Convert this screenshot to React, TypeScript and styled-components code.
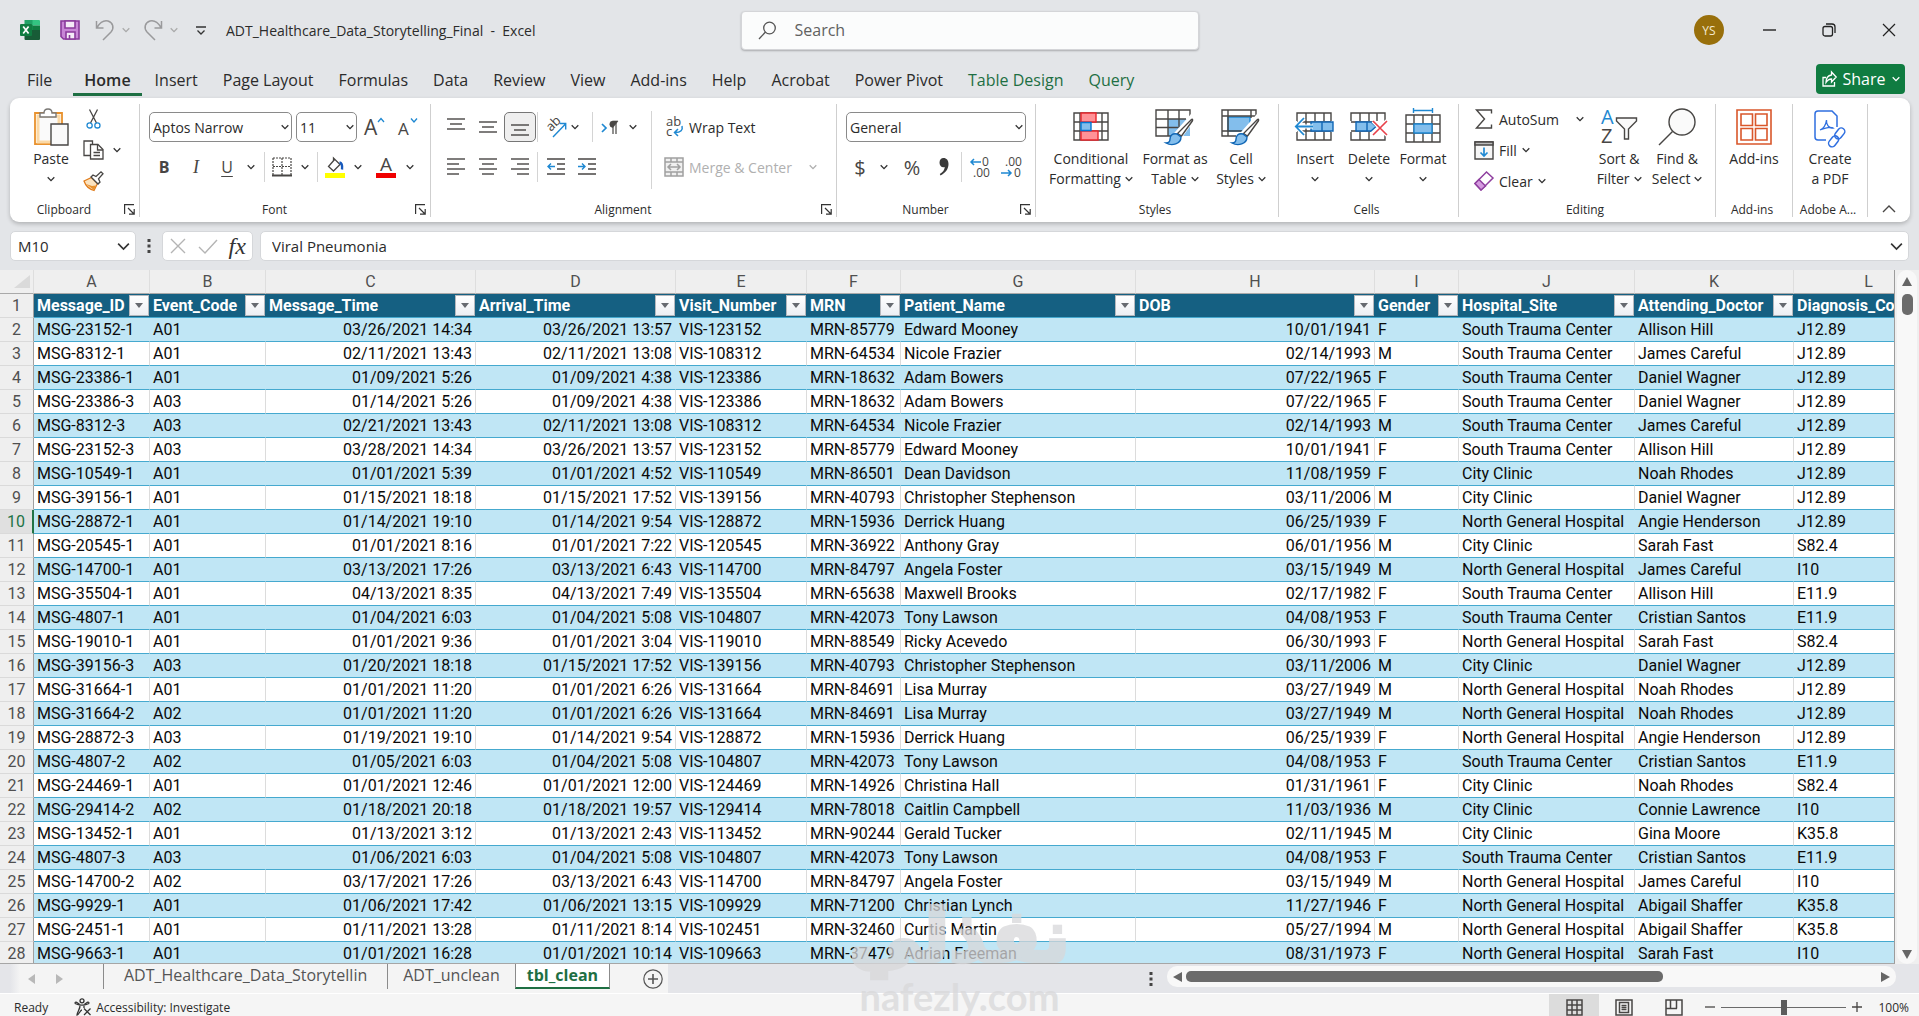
import React from "react";
import styled, { createGlobalStyle, css } from "styled-components";

const UI = `"Open Sans", "Noto Sans", sans-serif`;
const CELL = `Roboto, "Noto Sans", sans-serif`;
const INK = "#2b2b2b";
const LINE = "#484644";
const BLUE = "#1e88d2";
const GREEN = "#1e6f43";

const GlobalStyle = createGlobalStyle`
  *, *::before, *::after { box-sizing: border-box; }
  body { margin: 0; background: #e3e5e8; color: ${INK}; font-family: ${UI}; font-size: 14px; overflow: hidden; }
  button, input, select { font: inherit; color: inherit; }
  button { border: 0; padding: 0; background: none; cursor: pointer; }
  svg { display: block; flex: none; overflow: visible; }
`;

const Window = styled.div`
  display: flex;
  flex-direction: column;
  height: 100vh;
  position: relative;
`;

/* ---------- Title bar ---------- */
const TitleBar = styled.header`
  display: grid;
  grid-template-columns: 1fr minmax(200px, 458px) 1fr;
  align-items: center;
  height: 60px;
  padding-left: 20px;
  flex: none;
`;
const QuickAccess = styled.div`
  display: flex;
  align-items: center;
  min-width: 0;
`;
const QuickButton = styled.button<{ $w?: number; $ml?: number }>`
  display: flex;
  align-items: center;
  justify-content: center;
  width: ${(p) => p.$w ?? 20}px;
  height: 24px;
  margin-left: ${(p) => p.$ml ?? 0}px;
`;
const DocTitle = styled.h1`
  margin: 0 0 0 15px;
  font-size: 14px;
  font-weight: 400;
  white-space: pre;
`;
const SearchBox = styled.label`
  display: flex;
  align-items: center;
  gap: 16px;
  height: 39px;
  padding: 0 16px;
  border-radius: 4px;
  background: #fbfcfc;
  border: 1px solid #d4d5d8;
  box-shadow: 0 1px 2px rgba(0, 0, 0, 0.25);
`;
const SearchInput = styled.input`
  flex: 1;
  min-width: 0;
  border: 0;
  outline: 0;
  background: none;
  font-size: 16px;
  &::placeholder { color: #616161; opacity: 1; }
`;
const WindowControls = styled.div`
  display: flex;
  align-items: center;
  justify-content: flex-end;
`;
const Avatar = styled.button`
  width: 30px;
  height: 30px;
  margin-right: 15px;
  border-radius: 50%;
  background: #986f0b;
  color: #f4e9cf;
  font-size: 12px;
`;
const WindowButton = styled.button`
  display: flex;
  align-items: center;
  justify-content: center;
  width: 60px;
  height: 40px;
`;

/* ---------- Ribbon tabs ---------- */
const TabStrip = styled.nav`
  display: flex;
  align-items: flex-start;
  gap: 1px;
  height: 38px;
  flex: none;
  padding: 0 14px 0 15px;
`;
const RibbonTab = styled.button<{ $active?: boolean; $context?: boolean }>`
  display: flex;
  align-items: center;
  height: 36px;
  padding: 6px 12px 0;
  font-size: 16px;
  border-bottom: 3px solid transparent;
  white-space: nowrap;
  ${(p) => p.$context && css`color: ${GREEN};`}
  ${(p) =>
    p.$active &&
    css`
      margin-left: 8px;
      padding: 6px 11px 0;
      font-weight: 600;
      border-bottom-color: ${GREEN};
    `}
`;
const ShareButton = styled.button`
  display: flex;
  align-items: center;
  justify-content: center;
  gap: 6px;
  width: 89px;
  height: 30px;
  margin: 4px 0 0 auto;
  border-radius: 4px;
  background: #107c41;
  color: #fff;
  font-size: 16px;
`;

/* ---------- Ribbon ---------- */
const Ribbon = styled.section`
  display: flex;
  flex: none;
  height: 124px;
  margin: 0 9px 0 10px;
  padding: 6px 0 5px;
  border-radius: 9px;
  background: #fff;
  box-shadow: 0 2px 4px rgba(0, 0, 0, 0.22);
`;
const Group = styled.section<{ $w: number }>`
  display: flex;
  flex-direction: column;
  flex: 0 0 ${(p) => p.$w}px;
  border-right: 1px solid #cfcfcf;
`;
const GroupBody = styled.div<{ $pad?: number; $center?: boolean }>`
  display: flex;
  flex: 1;
  align-items: flex-start;
  padding-left: ${(p) => p.$pad ?? 0}px;
  ${(p) => p.$center && css`justify-content: center;`}
`;
const GroupFooter = styled.footer`
  display: flex;
  align-items: center;
  justify-content: flex-end;
  gap: 6px;
  height: 16px;
  padding-right: 4px;
  font-size: 12px;
`;
const GroupLabel = styled.span`
  flex: 1;
  text-align: center;
  white-space: nowrap;
`;
const Rows = styled.div<{ $tight?: boolean }>`
  display: flex;
  flex-direction: column;
  gap: ${(p) => (p.$tight ? 1 : 10)}px;
  padding-top: ${(p) => (p.$tight ? 0 : 8)}px;
`;
const Row = styled.div<{ $gap?: number }>`
  display: flex;
  align-items: center;
  gap: ${(p) => p.$gap ?? 0}px;
  height: 30px;
`;
const Tool = styled.button<{ $w?: number; $on?: boolean }>`
  display: flex;
  align-items: center;
  justify-content: center;
  width: ${(p) => p.$w ?? 28}px;
  height: 30px;
  font-size: 17px;
  color: ${LINE};
  ${(p) =>
    p.$on &&
    css`
      border: 1px solid #767676;
      border-radius: 5px;
      background: #efefef;
    `}
`;
const Rule = styled.i<{ $l?: number; $r?: number; $tall?: boolean }>`
  width: 1px;
  height: ${(p) => (p.$tall ? 78 : 30)}px;
  margin: ${(p) => (p.$tall ? 7 : 0)}px ${(p) => p.$r ?? 3}px 0 ${(p) => p.$l ?? 3}px;
  background: #d4d4d4;
`;
const SelectWrap = styled.span<{ $w: number }>`
  display: grid;
  grid-template: 30px / 1fr;
  align-items: center;
  width: ${(p) => p.$w}px;
  & > * { grid-area: 1 / 1; }
  & > svg { justify-self: end; margin-right: 3px; pointer-events: none; }
`;
const Select = styled.select`
  appearance: none;
  width: 100%;
  height: 30px;
  padding: 0 14px 0 3px;
  border: 1px solid #8a8a8a;
  border-radius: 5px;
  background: #fff;
  font-size: 14px;
`;
const LargeTool = styled.button<{ $w: number }>`
  display: flex;
  flex-direction: column;
  align-items: center;
  width: ${(p) => p.$w}px;
  line-height: 20px;
  white-space: nowrap;
`;
const LargeIcon = styled.span`
  display: flex;
  align-items: center;
  height: 45px;
`;
const LargeLine = styled.span`
  display: flex;
  align-items: center;
  gap: 4px;
  height: 20px;
`;
const WideTool = styled.button<{ $off?: boolean }>`
  display: flex;
  align-items: center;
  gap: 5px;
  height: 30px;
  white-space: nowrap;
  ${(p) => p.$off && css`color: #b0b0b0;`}
`;
const Spacer = styled.span`
  width: 12px;
`;
const Bold = styled.b`font-size: 16px;`;
const Italic = styled.i`font-family: "Liberation Serif", serif; font-size: 18px;`;
const Under = styled.u`font-size: 16px; text-underline-offset: 3px;`;
const FormatMark = styled.span`font-size: 20px;`;
const CollapseArea = styled.div`
  display: flex;
  flex: 1;
  align-items: flex-end;
  justify-content: center;
  padding-bottom: 4px;
`;

/* ---------- Formula bar ---------- */
const FormulaBar = styled.section`
  display: flex;
  align-items: center;
  flex: none;
  height: 48px;
  padding: 0 10px;
`;
const Field = styled.div<{ $w?: number }>`
  display: flex;
  align-items: center;
  height: 30px;
  border: 1px solid #d5d7da;
  border-radius: 5px;
  background: #fff;
  ${(p) => (p.$w ? css`width: ${p.$w}px;` : css`flex: 1; margin-left: 7px;`)}
`;
const FieldInput = styled.input<{ $pad: number }>`
  flex: 1;
  min-width: 0;
  height: 28px;
  padding: 0 0 0 ${(p) => p.$pad}px;
  border: 0;
  outline: 0;
  background: none;
  font-size: 15px;
`;
const FieldButton = styled.button<{ $w?: number }>`
  display: flex;
  align-items: center;
  justify-content: center;
  width: ${(p) => p.$w ?? 24}px;
  height: 28px;
`;
const FxMark = styled.span`
  font: italic 24px "Liberation Serif", serif;
  color: #333;
`;
const Grip = styled.span`
  width: 26px;
  display: flex;
  justify-content: center;
`;

/* ---------- Sheet ---------- */
const SheetArea = styled.main`
  display: flex;
  flex: 1;
  min-height: 0;
  background: #efefef;
`;
const GridClip = styled.div`
  flex: 1;
  min-width: 0;
  overflow: hidden;
  border-right: 1px solid #9c9c9c;
  border-bottom: 1px solid #a6a6a6;
`;
const Grid = styled.table`
  table-layout: fixed;
  width: 0;
  border-collapse: separate;
  border-spacing: 0;
  font-family: ${CELL};
  font-size: 16px;
  line-height: 23px;
  color: #0a0a0a;
`;
const Letter = styled.th`
  height: 24px;
  padding: 0;
  font-weight: 400;
  color: #505050;
  background: #efefef;
  border-right: 1px solid #dedede;
  border-bottom: 1px solid #a9a9a9;
`;
const CornerMark = styled.span`
  display: flex;
  justify-content: flex-end;
  padding-right: 3px;
`;
const RowHead = styled.th<{ $on?: boolean }>`
  height: 24px;
  padding: 0;
  font-weight: 400;
  color: #505050;
  background: #efefef;
  border-right: 1px solid #a0a0a0;
  border-bottom: 1px solid #dadada;
  ${(p) =>
    p.$on &&
    css`
      color: #217346;
      background: #e0e0e0;
      border-right: 2px solid #217346;
    `}
`;
const HeadCell = styled.th`
  height: 24px;
  padding: 0 1px 0 3px;
  background: #156082;
  border-bottom: 1px solid #45a9cf;
  color: #fff;
  font-weight: 700;
`;
const HeadInner = styled.div`
  display: flex;
  align-items: center;
  justify-content: space-between;
  height: 23px;
`;
const FilterButton = styled.button`
  display: flex;
  align-items: center;
  justify-content: center;
  flex: none;
  width: 20px;
  height: 21px;
  border: 1px solid #b5b8bd;
  background: linear-gradient(#fff, #eceff4);
`;
const BodyRow = styled.tr<{ $band: boolean }>`
  background: ${(p) => (p.$band ? "#c0e6f5" : "#fff")};
  & > td { border-right-color: ${(p) => (p.$band ? "#c0e6f5" : "#dcdcdc")}; }
`;
const Cell = styled.td<{ $right?: boolean }>`
  height: 24px;
  padding: 0 3px;
  border-right: 1px solid;
  border-bottom: 1px solid #45a9cf;
  white-space: nowrap;
  overflow: hidden;
  text-align: ${(p) => (p.$right ? "right" : "left")};
`;

const VScroll = styled.div`
  display: flex;
  flex-direction: column;
  align-items: center;
  justify-content: space-between;
  width: 20px;
  margin: 0 2px;
  padding: 7px 0 4px;
  border-radius: 10px;
  background: #f8f8f8;
`;
const VTrack = styled.div`
  flex: 1;
  padding-top: 7px;
`;
const VThumb = styled.div`
  width: 11px;
  height: 21px;
  border-radius: 5px;
  background: #6b6b6b;
`;
const ScrollButton = styled.button`
  display: flex;
`;

const SheetBar = styled.div`
  display: flex;
  align-items: center;
  flex: none;
  height: 30px;
  background: #e4e5e9;
  border-bottom: 1px solid #fff;
`;
const SheetNav = styled.div`
  display: flex;
  align-items: center;
  align-self: stretch;
  gap: 21px;
  width: 103px;
  padding-left: 28px;
  background: linear-gradient(90deg, #e4e5e9 10px, #f4f4f4 20px);
`;
const SheetTabs = styled.div`
  display: flex;
  align-self: stretch;
  background: #f4f4f4;
`;
const SheetTab = styled.button<{ $active?: boolean; $pad?: number }>`
  height: 25px;
  padding: 0 ${(p) => p.$pad ?? 15}px 3px;
  border-left: 1px solid #8b8b8b;
  font-size: 16px;
  line-height: 22px;
  color: #555;
  white-space: nowrap;
  ${(p) =>
    p.$active &&
    css`
      padding: 0 11px 1px;
      background: #fff;
      color: ${GREEN};
      font-weight: 700;
      border-right: 1px solid #8b8b8b;
      border-bottom: 2px solid ${GREEN};
    `}
`;
const AddSheet = styled.button`
  display: flex;
  align-items: center;
  justify-content: center;
  padding: 0 5px 0 33px;
`;
const HScroll = styled.div`
  display: flex;
  align-items: center;
  gap: 4px;
  width: 38%;
  height: 21px;
  margin: 0 23px 4px 14px;
  padding: 0 6px;
  border-radius: 10px;
  background: #f8f8f8;
`;
const HTrack = styled.div`
  flex: 1;
`;
const HThumb = styled.div`
  width: 69%;
  height: 11px;
  border-radius: 5px;
  background: #6b6b6b;
`;
const BarGrip = styled.span`
  margin-left: auto;
`;

/* ---------- Status bar ---------- */
const StatusBar = styled.footer`
  display: flex;
  align-items: center;
  flex: none;
  height: 22px;
  padding: 4px 10px 0 14px;
  background: #f5f5f5;
  font-size: 12px;
`;
const StatusButton = styled.button`
  display: flex;
  align-items: center;
  gap: 4px;
  margin-left: 26px;
`;
const ViewButton = styled.button<{ $on?: boolean }>`
  display: flex;
  align-items: center;
  justify-content: center;
  width: 50px;
  height: 22px;
  margin-top: -4px;
  padding-top: 4px;
  background: ${(p) => (p.$on ? "#dcdcdc" : "none")};
`;
const ViewGroup = styled.div`
  display: flex;
  margin-left: auto;
`;
const ZoomStep = styled.button`
  display: flex;
`;
const Zoom = styled.div`
  display: flex;
  align-items: center;
  gap: 6px;
  margin: 0 16px 0 6px;
`;
const ZoomRange = styled.input`
  appearance: none;
  width: 125px;
  height: 16px;
  margin: 0;
  background: linear-gradient(#6a6a6a, #6a6a6a) center / 100% 1px no-repeat;
  &::-webkit-slider-thumb {
    appearance: none;
    width: 6px;
    height: 15px;
    background: #5c5c5c;
  }
`;

/* ---------- Watermark ---------- */
const Watermark = styled.div`
  position: absolute;
  left: 50%;
  bottom: 0;
  transform: translateX(-50%);
  display: flex;
  flex-direction: column;
  align-items: center;
  gap: 7px;
  color: #d8d8da;
  opacity: 0.75;
  pointer-events: none;
  white-space: nowrap;
`;
const ArabicMark = styled.span`
  font: 700 72px/66px "DejaVu Sans", sans-serif;
  -webkit-text-stroke: 4px #d8d8da;
`;
const LatinMark = styled.span`
  font: 700 38px/40px Lato, sans-serif;
`;

/* ---------- Icons ---------- */
type IconProps = { w: number; h: number; children: React.ReactNode; sw?: number; stroke?: string };
const Icon = ({ w, h, children, sw = 1.4, stroke = LINE }: IconProps) => (
  <svg width={w} height={h} viewBox={`0 0 ${w} ${h}`} fill="none" stroke={stroke} strokeWidth={sw} aria-hidden="true">
    {children}
  </svg>
);
const Chevron = ({ w = 8, color = "#333" }: { w?: number; color?: string }) => (
  <svg width={w} height={w} viewBox="0 0 8 8" fill="none" stroke={color} strokeWidth={w > 9 ? 1 : 1.3} aria-hidden="true">
    <path d="M0.7 2.2 4 5.6 7.3 2.2" />
  </svg>
);
const Dots = () => (
  <svg width="4" height="14" viewBox="0 0 4 14" fill="#444" aria-hidden="true">
    <path d="M.5 0h3v3h-3zM.5 5.500h3v3h-3zM.5 11h3v3h-3z" />
  </svg>
);
const Triangle = ({ d, color = "#666", w = 10, h = 10 }: { d: string; color?: string; w?: number; h?: number }) => (
  <svg width={w} height={h} viewBox={`0 0 ${w} ${h}`} fill={color} aria-hidden="true">
    <path d={d} />
  </svg>
);
const ExcelLogo = () => (
  <svg width="20" height="20" viewBox="0 0 20 20" aria-label="Excel" role="img">
    <path d="M4.500 0H13v10H4.500z" fill="#21a366" />
    <path d="M12.500 0H19a1 1 0 0 1 1 1v4.500h-7.500z" fill="#33c481" />
    <path d="M12.500 5.500H20V10h-7.500z" fill="#107c41" />
    <path d="M4.500 10H20v9a1 1 0 0 1-1 1H5.500a1 1 0 0 1-1-1z" fill="#185c37" />
    <path d="M4.500 5.500h8V10h-8z" fill="#107c41" />
    <rect y="4" width="12" height="12" rx="1" fill="#107c41" />
    <path d="m3.200 6.500 5.400 7M8.600 6.500l-5.400 7" stroke="#fff" strokeWidth="1.700" />
  </svg>
);
const SaveIcon = () => (
  <Icon w={20} h={20} stroke="#8a3a9c" sw={1.6}>
    <path d="M1 1h18v18H3.500L1 16.500z" fill="#c886d6" />
    <path d="M5 1h10v7H5z" fill="#f5eaf7" />
    <path d="M6 12h9v7H6z" fill="#f5eaf7" />
    <path d="M9.500 15v4" />
  </Icon>
);
const UndoIcon = ({ flip }: { flip?: boolean }) => (
  <Icon w={20} h={22} stroke="#9a9a9c" sw={1.5}>
    <g transform={flip ? "matrix(-1 0 0 1 20 0)" : undefined}>
      <path d="M1.500 2v7h7M2 8.500C5 3.500 9 1 13 2c5 1.500 6.500 7 3 11l-8 8" />
    </g>
  </Icon>
);
const SearchIcon = () => (
  <Icon w={19} h={19} stroke="#555" sw={1.3}>
    <circle cx="11.500" cy="7" r="5.800" />
    <path d="M7.500 11 1 18" />
  </Icon>
);
const LauncherIcon = () => (
  <Icon w={11} h={11} sw={1.2} stroke="#333">
    <path d="M.6 10V.6H10M4 4l6 6M10.200 5v5.200H5" />
  </Icon>
);
const PasteIcon = () => (
  <Icon w={36} h={38}>
    <path d="M2 5h27v31H2z" fill="#fff" stroke="#e8912d" strokeWidth="1.800" />
    <path d="M5 8h21v26H5z" fill="#fafafa" stroke="#fbd9a6" strokeWidth="3" />
    <path d="M7 9V5h4c0-3 2-4 4-4s4 1 4 4h4v4z" fill="#fff" stroke="#797774" />
    <path d="M18 16h17v21H18z" fill="#fafafa" />
  </Icon>
);
const CutIcon = () => (
  <Icon w={15} h={20} sw={1.3}>
    <path d="M3.500.5 10.500 14M11.500.5 4.500 14" />
    <circle cx="3.600" cy="16.400" r="2.600" stroke={BLUE} />
    <circle cx="11.400" cy="16.400" r="2.600" stroke={BLUE} />
  </Icon>
);
const CopyIcon = () => (
  <Icon w={21} h={20} sw={1.3}>
    <path d="M7.500 15.500H1V1h8.500v3" />
    <path d="M7.500 4.500h7.500l5 5V19H7.500z" fill="#fff" />
    <path d="M14.500 5v5H20M10.500 12.500h6.500M10.500 15.500h6.500" />
  </Icon>
);
const BrushIcon = () => (
  <Icon w={21} h={20} sw={1.3}>
    <path d="m1 10 7.500-3.500 6 6L11 19.500C6 18 2.500 14.500 1 10z" fill="#fbe3c0" stroke="#e07b1a" />
    <path d="m3 13 8 6 2-4.500-4 .5z" fill="#e8912d" stroke="none" />
    <path d="m8 6 2-2 3 1.500L18 .8l2 2-4.500 5L17 11l-2 2z" fill="#fff" />
  </Icon>
);
const FontSizeIcon = ({ big }: { big?: boolean }) => (
  <Icon w={20} h={22} sw={1.3}>
    <text x="0" y="19" fontFamily="Open Sans" fontSize={big ? 21 : 17} fill={LINE} stroke="none">A</text>
    <path d={big ? "m14 6 3-3.500 3 3.500" : "m13 2.500 3 3.500 3-3.500"} stroke={BLUE} />
  </Icon>
);
const BordersIcon = () => (
  <Icon w={20} h={20} sw={1.2}>
    <path d="M1 1h18v17M1 1v17M10 1v17M1 9.500h18" strokeDasharray="2 1" />
    <path d="M0 18.500h20" strokeWidth="2" />
  </Icon>
);
const FillColorIcon = () => (
  <Icon w={20} h={22} sw={1.3}>
    <path d="M10 3 3.500 10.500l5 4.500L15 8.500 8.500 2v3" />
    <path d="M14.500 6.500c2.500.5 3 3 2.500 7" stroke="#185abd" strokeWidth="2.400" />
    <path d="M0 17h20v5H0z" fill="#ffff00" stroke="none" />
  </Icon>
);
const FontColorIcon = () => (
  <Icon w={20} h={22}>
    <text x="4" y="15" fontFamily="Open Sans" fontSize="19" fill={LINE} stroke="none">A</text>
    <path d="M0 17h20v5H0z" fill="#f00000" stroke="none" />
  </Icon>
);
const LinesIcon = ({ rows, shift = 0 }: { rows: [number, number][]; shift?: number }) => (
  <Icon w={18} h={18} sw={1.4}>
    {rows.map(([x, len], i) => (
      <path key={i} d={`M${x} ${shift + 1 + i * 5}h${len}`} />
    ))}
  </Icon>
);
const FULL: [number, number][] = [[0, 18], [3, 12], [0, 18]];
const OrientationIcon = () => (
  <Icon w={21} h={22} sw={1.4}>
    <text x="0" y="0" transform="translate(5 16) rotate(-45)" fontFamily="Open Sans" fontSize="13" fill={LINE} stroke="none">ab</text>
    <path d="M7 21 19.500 8M14 7.500h5.700v6" stroke={BLUE} />
  </Icon>
);
const DirectionIcon = () => (
  <Icon w={18} h={16} sw={1.4}>
    <path d="m1 5 4 4-4 4" stroke={BLUE} strokeWidth="1.700" />
    <path d="M12 2v13M15 2v13" strokeWidth="1.200" />
    <path d="M17 2h-5a3.200 3.200 0 0 0 0 6.400z" fill={LINE} strokeWidth="0.600" />
  </Icon>
);
const CommaIcon = () => (
  <svg width="10" height="18" viewBox="0 0 10 18" fill="#3a3a3a" aria-hidden="true">
    <path d="M4.500 0C7.500 0 9.500 2.200 9.500 6c0 5-3 9-8 11.500L.8 16C4 14 5.500 12 5.800 9 3 10 .5 8 .5 4.800.5 2 2.200 0 4.500 0z" />
  </svg>
);
const IndentIcon = ({ out }: { out?: boolean }) => (
  <Icon w={18} h={18} sw={1.4}>
    <path d="M0 1h18M10 6h8M10 11h8M0 16h18" />
    <path d={out ? "M8 8.500H1M4 5.500l-3 3 3 3" : "M0 8.500h7M4 5.500l3 3-3 3"} stroke={BLUE} />
  </Icon>
);
const WrapIcon = () => (
  <Icon w={20} h={22} sw={1.5}>
    <text x="2" y="10" fontFamily="Open Sans" fontSize="13" fill={LINE} stroke="none">ab</text>
    <text x="2" y="20" fontFamily="Open Sans" fontSize="13" fill={LINE} stroke="none">c</text>
    <path d="M18 10c1 4-1 6.500-7 6.500M14 13l-3.500 3.500L14 20" stroke={BLUE} />
  </Icon>
);
const MergeIcon = () => (
  <Icon w={20} h={20} stroke="#a0a0a0" sw={1.5}>
    <path d="M1 1h18v18H1zM1 5h18M1 15h18M7 1v4M13 1v4M7 15v4M13 15v4" fill="#f0f0f0" />
    <path d="M4 10h12M7 7l-3 3 3 3M13 7l3 3-3 3" />
  </Icon>
);
const DecimalIcon = ({ more }: { more?: boolean }) => (
  <Icon w={22} h={22} sw={1.5}>
    <text x={more ? 13 : 4} y="10" fontFamily="Open Sans" fontSize="12" fill={LINE} stroke="none">{more ? "0" : ".00"}</text>
    <text x={more ? 4 : 13} y="21" fontFamily="Open Sans" fontSize="12" fill={LINE} stroke="none">{more ? ".00" : "0"}</text>
    <path d={more ? "M12 6H2M5 3 2 6l3 3" : "M0 17h10M7 14l3 3-3 3"} stroke={BLUE} />
  </Icon>
);
const CondFormatIcon = () => (
  <Icon w={36} h={30}>
    <path d="M1 1h34v27H1zM7 1v27M29 1v27M1 10h34M1 19h34" />
    <path d="M8 1h15v9H8zM8 19h17v9H8z" fill="#ff9297" stroke="#e8262d" />
    <path d="M8 10.500h10v8H8z" fill="#83beec" stroke="#0078d4" />
  </Icon>
);
const BrushOver = () => (
  <>
    <path d="M36 8 21 25l4 3L38 10z" fill="#fff" stroke="#fff" strokeWidth="4" />
    <path d="M36.500 10.500c1-1 1.500.5.8 1.500L26.500 27l-4-2.500z" fill="#fff" />
    <path d="M22 25c-5-1-7 2-7 5s-2 4-4 4c6 3.500 15 1 15-6z" fill="#83beec" stroke="#1066b5" />
  </>
);
const FormatTableIcon = () => (
  <Icon w={40} h={36}>
    <path d="M13 10h22v17H13z" fill="#83beec" stroke="none" />
    <path d="M35 9V1H1v26h16M13 1v26M24 1v18M1 10h30M1 18.500h22" />
    <BrushOver />
  </Icon>
);
const CellStylesIcon = () => (
  <Icon w={40} h={36}>
    <path d="M7 8h22v14H7z" fill="#83beec" stroke="#1e88d2" />
    <path d="M35 7V1H1v26h14M7 1v26M30 1v8M1 7h33M1 22h20" />
    <BrushOver />
  </Icon>
);
const InsertCellsIcon = () => (
  <Icon w={40} h={30}>
    <path d="M2 9V1h34v8M2 20v8h34v-8M11 1v27M20 1v8M29 1v8M20 20v8M29 20v8M2 10h34M2 19h34" />
    <path d="M16 10h22v9H16zM27 10v9" fill="#83beec" stroke="#1066b5" />
    <path d="M18 14.500H1M9 6l-8.200 8.500L9 23" stroke="#fff" strokeWidth="4" />
    <path d="M18 14.500H1M9 6l-8.200 8.500L9 23" stroke={BLUE} strokeWidth="1.800" />
  </Icon>
);
const DeleteCellsIcon = () => (
  <Icon w={38} h={30}>
    <path d="M1 9V1h34v8M1 20v8h34v-5M10 1v8M19 1v8M27 1v8M10 20v8M19 20v8M1 10h22M1 19h20" />
    <path d="M6 10h15l5 4.500-5 4.500H6zM17 10v9" fill="#83beec" stroke="#1066b5" />
    <path d="m23 9 14 14M37 9 23 23" stroke="#fff" strokeWidth="4" />
    <path d="m23 9 14 14M37 9 23 23" stroke="#e8404a" strokeWidth="1.600" />
  </Icon>
);
const FormatCellsIcon = () => (
  <Icon w={36} h={36}>
    <path d="M1 6h34v27H1zM9 6v27M27 6v27M18 6v9M18 24v9M1 15h34M1 24h34" />
    <path d="M9 15h18v9H9z" fill="#83beec" stroke={BLUE} />
    <path d="M8 1.500h20M8.500-1v5M27.500-1v5" stroke={BLUE} />
  </Icon>
);
const SigmaIcon = () => (
  <Icon w={20} h={20}>
    <path d="M17.500 4.500V1h-15l8 9-8 9h15v-3.500" />
  </Icon>
);
const FillIcon = () => (
  <Icon w={20} h={19}>
    <path d="M1 1h18v17H1z" fill="#f6f6f6" />
    <path d="M1 1h18v3H1z" fill="#bbb" />
    <path d="M10 6.500v8.500M6.500 11.500 10 15l3.500-3.500" stroke={BLUE} strokeWidth="1.700" />
  </Icon>
);
const ClearIcon = () => (
  <Icon w={20} h={20} stroke="#8f3f9f" sw={1.5}>
    <path d="M12.500 1 19 7 7 19 1 12.500z" fill="#fff" />
    <path d="M1 12.500 5 8.500l6.500 6.500L7 19z" fill="#d59be0" />
  </Icon>
);
const SortFilterIcon = () => (
  <Icon w={38} h={38}>
    <text x="1" y="16" fontFamily="Open Sans" fontSize="20" fill={BLUE} stroke="none">A</text>
    <text x="1" y="35" fontFamily="Open Sans" fontSize="20" fill={LINE} stroke="none">Z</text>
    <path d="M16.500 10h20v3l-8 8v10h-4V21l-8-8z" fill="#fafafa" />
  </Icon>
);
const FindIcon = () => (
  <Icon w={38} h={38}>
    <circle cx="24" cy="14" r="13" fill="#fafafa" />
    <path d="M14.500 23.500 1 37" />
  </Icon>
);
const AddInsIcon = () => (
  <Icon w={36} h={36} stroke="#d9572b" sw={1.6}>
    <path d="M1 1h34v34H1zM5 5h11.500v11.500H5zM19.500 5H31v11.500H19.500zM5 19.500h11.500V31H5zM19.500 19.500H31V31H19.500z" />
  </Icon>
);
const PdfIcon = () => (
  <Icon w={32} h={36} stroke="#2f6fe0" sw={1.5}>
    <path d="M12 31H4a3 3 0 0 1-3-3V5a3 3 0 0 1 3-3h14l5 5v11" />
    <path d="M6 21c5-2 6-6 6.500-10C12 15 15 20 19 19c-3-1.500-8 0-13 2z" strokeWidth="1.300" />
    <g transform="rotate(-52 23 28)">
      <rect x="11.500" y="24.500" width="12" height="7" rx="3.500" />
      <rect x="21.500" y="24.500" width="12" height="7" rx="3.500" />
    </g>
  </Icon>
);
const ShareIcon = () => (
  <Icon w={15} h={16} stroke="#fff" sw={1.3}>
    <path d="M4 6.500H1V15h11.500v-4" />
    <path d="M9.500 1v3C6 4.500 4 7 4 11.500c1.500-2.500 3-3.500 5.500-3.500v3L14.200 6z" />
  </Icon>
);
const AccessibilityIcon = () => (
  <Icon w={18} h={18} sw={1.3} stroke="#333">
    <circle cx="8" cy="2.800" r="2" />
    <path d="M1 5.500c4 2 10 2 14 0M1 5.500c0-3 3 0 4.500.5M15 5.500c0-3-3 0-4.500.5M6 7c.5 4-3 7-3 10 2 0 3-5 5-5M10 7v3M10 10.500l6.500 6.500M16.500 10.500 10 17" />
  </Icon>
);

/* ---------- Data ---------- */
const columns: { letter: string; name: string; w: number; right?: boolean }[] = [
  { letter: "A", name: "Message_ID", w: 116 },
  { letter: "B", name: "Event_Code", w: 116 },
  { letter: "C", name: "Message_Time", w: 210, right: true },
  { letter: "D", name: "Arrival_Time", w: 200, right: true },
  { letter: "E", name: "Visit_Number", w: 131 },
  { letter: "F", name: "MRN", w: 94 },
  { letter: "G", name: "Patient_Name", w: 235 },
  { letter: "H", name: "DOB", w: 239, right: true },
  { letter: "I", name: "Gender", w: 84 },
  { letter: "J", name: "Hospital_Site", w: 176 },
  { letter: "K", name: "Attending_Doctor", w: 159 },
  { letter: "L", name: "Diagnosis_Code", w: 150 },
];

const rows = `23152-1|A01|03/26/2021 14:34|03/26/2021 13:57|123152|85779|Edward Mooney|10/01/1941|F|S|Allison Hill|J12.89
8312-1|A01|02/11/2021 13:43|02/11/2021 13:08|108312|64534|Nicole Frazier|02/14/1993|M|S|James Careful|J12.89
23386-1|A01|01/09/2021 5:26|01/09/2021 4:38|123386|18632|Adam Bowers|07/22/1965|F|S|Daniel Wagner|J12.89
23386-3|A03|01/14/2021 5:26|01/09/2021 4:38|123386|18632|Adam Bowers|07/22/1965|F|S|Daniel Wagner|J12.89
8312-3|A03|02/21/2021 13:43|02/11/2021 13:08|108312|64534|Nicole Frazier|02/14/1993|M|S|James Careful|J12.89
23152-3|A03|03/28/2021 14:34|03/26/2021 13:57|123152|85779|Edward Mooney|10/01/1941|F|S|Allison Hill|J12.89
10549-1|A01|01/01/2021 5:39|01/01/2021 4:52|110549|86501|Dean Davidson|11/08/1959|F|C|Noah Rhodes|J12.89
39156-1|A01|01/15/2021 18:18|01/15/2021 17:52|139156|40793|Christopher Stephenson|03/11/2006|M|C|Daniel Wagner|J12.89
28872-1|A01|01/14/2021 19:10|01/14/2021 9:54|128872|15936|Derrick Huang|06/25/1939|F|N|Angie Henderson|J12.89
20545-1|A01|01/01/2021 8:16|01/01/2021 7:22|120545|36922|Anthony Gray|06/01/1956|M|C|Sarah Fast|S82.4
14700-1|A01|03/13/2021 17:26|03/13/2021 6:43|114700|84797|Angela Foster|03/15/1949|M|N|James Careful|I10
35504-1|A01|04/13/2021 8:35|04/13/2021 7:49|135504|65638|Maxwell Brooks|02/17/1982|F|S|Allison Hill|E11.9
4807-1|A01|01/04/2021 6:03|01/04/2021 5:08|104807|42073|Tony Lawson|04/08/1953|F|S|Cristian Santos|E11.9
19010-1|A01|01/01/2021 9:36|01/01/2021 3:04|119010|88549|Ricky Acevedo|06/30/1993|F|N|Sarah Fast|S82.4
39156-3|A03|01/20/2021 18:18|01/15/2021 17:52|139156|40793|Christopher Stephenson|03/11/2006|M|C|Daniel Wagner|J12.89
31664-1|A01|01/01/2021 11:20|01/01/2021 6:26|131664|84691|Lisa Murray|03/27/1949|M|N|Noah Rhodes|J12.89
31664-2|A02|01/01/2021 11:20|01/01/2021 6:26|131664|84691|Lisa Murray|03/27/1949|M|N|Noah Rhodes|J12.89
28872-3|A03|01/19/2021 19:10|01/14/2021 9:54|128872|15936|Derrick Huang|06/25/1939|F|N|Angie Henderson|J12.89
4807-2|A02|01/05/2021 6:03|01/04/2021 5:08|104807|42073|Tony Lawson|04/08/1953|F|S|Cristian Santos|E11.9
24469-1|A01|01/01/2021 12:46|01/01/2021 12:00|124469|14926|Christina Hall|01/31/1961|F|C|Noah Rhodes|S82.4
29414-2|A02|01/18/2021 20:18|01/18/2021 19:57|129414|78018|Caitlin Campbell|11/03/1936|M|C|Connie Lawrence|I10
13452-1|A01|01/13/2021 3:12|01/13/2021 2:43|113452|90244|Gerald Tucker|02/11/1945|M|C|Gina Moore|K35.8
4807-3|A03|01/06/2021 6:03|01/04/2021 5:08|104807|42073|Tony Lawson|04/08/1953|F|S|Cristian Santos|E11.9
14700-2|A02|03/17/2021 17:26|03/13/2021 6:43|114700|84797|Angela Foster|03/15/1949|M|N|James Careful|I10
9929-1|A01|01/06/2021 17:42|01/06/2021 13:15|109929|71200|Christian Lynch|11/27/1946|F|N|Abigail Shaffer|K35.8
2451-1|A01|01/11/2021 13:28|01/11/2021 8:14|102451|32460|Curtis Martin|05/27/1994|M|N|Abigail Shaffer|K35.8
9663-1|A01|01/01/2021 16:28|01/01/2021 10:14|109663|37479|Adrian Freeman|08/31/1973|F|N|Sarah Fast|I10`
  .split("\n")
  .map((line) => line.split("|"));

const sites: Record<string, string> = {
  S: "South Trauma Center",
  C: "City Clinic",
  N: "North General Hospital",
};
const show = (value: string, col: number) =>
  col === 0 ? `MSG-${value}` : col === 4 ? `VIS-${value}` : col === 5 ? `MRN-${value}` : col === 9 ? sites[value] : value;

const tabs = ["File", "Home", "Insert", "Page Layout", "Formulas", "Data", "Review", "View", "Add-ins", "Help", "Acrobat", "Power Pivot", "Table Design", "Query"];

/* ---------- Parts ---------- */
const Drop = ({ w = 18, color, label = "More options" }: { w?: number; color?: string; label?: string }) => (
  <Tool $w={w} aria-label={label}>
    <Chevron color={color} />
  </Tool>
);
const RibbonGroup = ({ w, label, launcher, pad, center, children }: { w: number; label: string; launcher?: boolean; pad?: number; center?: boolean; children: React.ReactNode }) => (
  <Group $w={w}>
    <GroupBody $pad={pad} $center={center}>{children}</GroupBody>
    <GroupFooter>
      <GroupLabel>{label}</GroupLabel>
      {launcher && (
        <ScrollButton aria-label={`${label} settings`}>
          <LauncherIcon />
        </ScrollButton>
      )}
    </GroupFooter>
  </Group>
);
const Large = ({ w, icon, lines, drop = "inline" }: { w: number; icon: React.ReactNode; lines: string[]; drop?: "inline" | "below" | "none" }) => (
  <LargeTool $w={w}>
    <LargeIcon>{icon}</LargeIcon>
    {lines.map((text, i) => (
      <LargeLine key={text}>
        {text}
        {drop === "inline" && i === lines.length - 1 && <Chevron />}
      </LargeLine>
    ))}
    {drop === "below" && (
      <LargeLine>
        <Chevron />
      </LargeLine>
    )}
  </LargeTool>
);

const RibbonPanel = () => (
  <Ribbon>
    <RibbonGroup w={130} label="Clipboard" launcher pad={18}>
      <Large w={46} icon={<PasteIcon />} lines={["Paste"]} drop="below" />
      <Rows $tight>
        <Row><Tool $w={38} aria-label="Cut"><CutIcon /></Tool></Row>
        <Row><Tool $w={38} aria-label="Copy"><CopyIcon /></Tool><Drop w={10} /></Row>
        <Row><Tool $w={38} aria-label="Format Painter"><BrushIcon /></Tool></Row>
      </Rows>
    </RibbonGroup>

    <RibbonGroup w={291} label="Font" launcher pad={9}>
      <Rows>
        <Row>
          <Row $gap={4}>
            <SelectWrap $w={143}>
              <Select aria-label="Font"><option>Aptos Narrow</option></Select>
              <Chevron />
            </SelectWrap>
            <SelectWrap $w={61}>
              <Select aria-label="Font size"><option>11</option></Select>
              <Chevron />
            </SelectWrap>
          </Row>
          <Tool $w={34} aria-label="Increase font size"><FontSizeIcon big /></Tool>
          <Tool $w={34} aria-label="Decrease font size"><FontSizeIcon /></Tool>
        </Row>
        <Row>
          <Tool $w={30} aria-label="Bold"><Bold>B</Bold></Tool>
          <Tool $w={34} aria-label="Italic"><Italic>I</Italic></Tool>
          <Tool aria-label="Underline"><Under>U</Under></Tool>
          <Drop w={20} />
          <Rule />
          <Tool aria-label="Borders"><BordersIcon /></Tool>
          <Drop />
          <Rule />
          <Tool aria-label="Fill color"><FillColorIcon /></Tool>
          <Drop />
          <Tool $w={38} aria-label="Font color"><FontColorIcon /></Tool>
          <Drop w={10} />
        </Row>
      </Rows>
    </RibbonGroup>

    <RibbonGroup w={406} label="Alignment" launcher pad={9}>
      <Rows>
        <Row>
          <Tool $w={32} aria-label="Top align"><LinesIcon rows={FULL} /></Tool>
          <Tool $w={32} aria-label="Middle align"><LinesIcon rows={FULL} shift={3} /></Tool>
          <Tool $w={32} $on aria-label="Bottom align"><LinesIcon rows={FULL} shift={6} /></Tool>
          <Rule $l={1} $r={4} />
          <Tool aria-label="Orientation"><OrientationIcon /></Tool>
          <Drop w={10} />
          <Rule $l={12} />
          <Tool aria-label="Text direction"><DirectionIcon /></Tool>
          <Drop />
        </Row>
        <Row>
          <Tool $w={32} aria-label="Align left"><LinesIcon rows={[[0, 18], [0, 12], [0, 18], [0, 12]]} /></Tool>
          <Tool $w={32} aria-label="Center"><LinesIcon rows={[[0, 18], [3, 12], [0, 18], [3, 12]]} /></Tool>
          <Tool $w={32} aria-label="Align right"><LinesIcon rows={[[0, 18], [6, 12], [0, 18], [6, 12]]} /></Tool>
          <Rule $l={1} $r={4} />
          <Tool aria-label="Decrease indent"><IndentIcon out /></Tool>
          <Tool $w={34} aria-label="Increase indent"><IndentIcon /></Tool>
        </Row>
      </Rows>
      <Rule $tall $l={9} $r={12} />
      <Rows>
        <Row><WideTool><WrapIcon />Wrap Text</WideTool></Row>
        <Row><WideTool $off disabled><MergeIcon />Merge &amp; Center</WideTool><Spacer /><Drop color="#b0b0b0" /></Row>
      </Rows>
    </RibbonGroup>

    <RibbonGroup w={199} label="Number" launcher pad={9}>
      <Rows>
        <Row>
          <SelectWrap $w={180}>
            <Select aria-label="Number format"><option>General</option></Select>
            <Chevron />
          </SelectWrap>
        </Row>
        <Row>
          <Tool aria-label="Currency"><FormatMark>$</FormatMark></Tool>
          <Drop w={20} />
          <Tool $w={36} aria-label="Percent"><FormatMark>%</FormatMark></Tool>
          <Tool aria-label="Comma style"><CommaIcon /></Tool>
          <Rule />
          <Tool $w={30} aria-label="Increase decimal"><DecimalIcon more /></Tool>
          <Tool $w={34} aria-label="Decrease decimal"><DecimalIcon /></Tool>
        </Row>
      </Rows>
    </RibbonGroup>

    <RibbonGroup w={243} label="Styles" pad={8}>
      <Large w={94} icon={<CondFormatIcon />} lines={["Conditional", "Formatting"]} />
      <Large w={74} icon={<FormatTableIcon />} lines={["Format as", "Table"]} />
      <Large w={58} icon={<CellStylesIcon />} lines={["Cell", "Styles"]} />
    </RibbonGroup>

    <RibbonGroup w={180} label="Cells" pad={9}>
      <Large w={54} icon={<InsertCellsIcon />} lines={["Insert"]} drop="below" />
      <Large w={54} icon={<DeleteCellsIcon />} lines={["Delete"]} drop="below" />
      <Large w={54} icon={<FormatCellsIcon />} lines={["Format"]} drop="below" />
    </RibbonGroup>

    <RibbonGroup w={257} label="Editing" pad={15}>
      <Rows $tight>
        <Row><WideTool><SigmaIcon />AutoSum</WideTool><Spacer /><Drop /></Row>
        <Row><WideTool><FillIcon />Fill<Chevron /></WideTool></Row>
        <Row><WideTool><ClearIcon />Clear<Chevron /></WideTool></Row>
      </Rows>
      <Large w={60} icon={<SortFilterIcon />} lines={["Sort &", "Filter"]} />
      <Large w={56} icon={<FindIcon />} lines={["Find &", "Select"]} />
    </RibbonGroup>

    <RibbonGroup w={77} label="Add-ins" center>
      <Large w={60} icon={<AddInsIcon />} lines={["Add-ins"]} drop="none" />
    </RibbonGroup>

    <RibbonGroup w={75} label="Adobe A..." center>
      <Large w={60} icon={<PdfIcon />} lines={["Create", "a PDF"]} drop="none" />
    </RibbonGroup>

    <CollapseArea>
      <ScrollButton aria-label="Collapse ribbon">
        <Icon w={14} h={8} sw={1.4}><path d="m1 7 6-6 6 6" /></Icon>
      </ScrollButton>
    </CollapseArea>
  </Ribbon>
);

const Spreadsheet = () => (
  <SheetArea>
    <GridClip>
      <Grid>
        <colgroup>
          <col style={{ width: 34 }} />
          {columns.map((c) => <col key={c.letter} style={{ width: c.w }} />)}
        </colgroup>
        <thead>
          <tr>
            <Letter aria-label="Select all">
              <CornerMark><Triangle w={16} h={13} d="M16 0v13H0z" color="#dadada" /></CornerMark>
            </Letter>
            {columns.map((c) => <Letter key={c.letter} scope="col">{c.letter}</Letter>)}
          </tr>
        </thead>
        <tbody>
          <tr>
            <RowHead scope="row">1</RowHead>
            {columns.map((c) => (
              <HeadCell key={c.letter}>
                <HeadInner>
                  {c.name}
                  <FilterButton aria-label={`Filter ${c.name}`}>
                    <Triangle w={8} h={5} d="M0 0h8L4 5z" color="#666a70" />
                  </FilterButton>
                </HeadInner>
              </HeadCell>
            ))}
          </tr>
          {rows.map((r, i) => (
            <BodyRow key={i} $band={i % 2 === 0}>
              <RowHead scope="row" $on={i === 8}>{i + 2}</RowHead>
              {r.map((v, j) => <Cell key={j} $right={columns[j].right}>{show(v, j)}</Cell>)}
            </BodyRow>
          ))}
        </tbody>
      </Grid>
    </GridClip>
    <VScroll>
      <ScrollButton aria-label="Scroll up"><Triangle d="M5 0l5 9H0z" /></ScrollButton>
      <VTrack><VThumb /></VTrack>
      <ScrollButton aria-label="Scroll down"><Triangle d="M0 0h10L5 9z" /></ScrollButton>
    </VScroll>
  </SheetArea>
);

export default function App() {
  return (
    <Window>
      <GlobalStyle />
      <TitleBar>
        <QuickAccess>
          <ExcelLogo />
          <QuickButton $ml={20} aria-label="Save"><SaveIcon /></QuickButton>
          <QuickButton $ml={15} aria-label="Undo"><UndoIcon /></QuickButton>
          <QuickButton $w={22} aria-label="Undo history"><Chevron color="#aaa" /></QuickButton>
          <QuickButton $ml={6} aria-label="Redo"><UndoIcon flip /></QuickButton>
          <QuickButton $w={22} aria-label="Redo history"><Chevron color="#aaa" /></QuickButton>
          <QuickButton $ml={6} aria-label="Customize toolbar">
            <Icon w={10} h={9} stroke="#333" sw={1.3}><path d="M0 1h10M1.500 4.500 5 8l3.500-3.500" /></Icon>
          </QuickButton>
          <DocTitle>{"ADT_Healthcare_Data_Storytelling_Final  -  Excel"}</DocTitle>
        </QuickAccess>
        <SearchBox>
          <SearchIcon />
          <SearchInput type="search" placeholder="Search" aria-label="Search" />
        </SearchBox>
        <WindowControls>
          <Avatar aria-label="Account">YS</Avatar>
          <WindowButton aria-label="Minimize"><Icon w={13} h={2} stroke="#222"><path d="M0 1h13" /></Icon></WindowButton>
          <WindowButton aria-label="Restore">
            <Icon w={14} h={14} stroke="#222" sw={1.3}>
              <rect x="1" y="3.500" width="9.500" height="9.500" rx="2" />
              <path d="M4 1h6a3 3 0 0 1 3 3v6" />
            </Icon>
          </WindowButton>
          <WindowButton aria-label="Close"><Icon w={14} h={14} stroke="#222" sw={1.2}><path d="m1 1 12 12M13 1 1 13" /></Icon></WindowButton>
        </WindowControls>
      </TitleBar>

      <TabStrip>
        {tabs.map((t, i) => (
          <RibbonTab key={t} $active={t === "Home"} $context={i > 11}>{t}</RibbonTab>
        ))}
        <ShareButton><ShareIcon />Share<Chevron color="#fff" /></ShareButton>
      </TabStrip>

      <RibbonPanel />

      <FormulaBar>
        <Field $w={126}>
          <FieldInput $pad={7} defaultValue="M10" aria-label="Name box" />
          <FieldButton aria-label="Names"><Chevron w={13} /></FieldButton>
        </Field>
        <Grip><Dots /></Grip>
        <Field $w={91}>
          <FieldButton $w={30} aria-label="Cancel"><Icon w={16} h={16} stroke="#b4b4b4"><path d="m1 1 14 14M15 1 1 15" /></Icon></FieldButton>
          <FieldButton $w={30} aria-label="Enter"><Icon w={20} h={15} stroke="#b4b4b4"><path d="m1 8 6 6L19 1" /></Icon></FieldButton>
          <FieldButton $w={30} aria-label="Insert function"><FxMark>fx</FxMark></FieldButton>
        </Field>
        <Field>
          <FieldInput $pad={11} defaultValue="Viral Pneumonia" aria-label="Formula" />
          <FieldButton aria-label="Expand formula bar"><Chevron w={13} /></FieldButton>
        </Field>
      </FormulaBar>

      <Spreadsheet />

      <SheetBar>
        <SheetNav>
          <ScrollButton aria-label="Previous sheets"><Triangle w={7} h={10} d="M7 0v10L0 5z" color="#b8b8b8" /></ScrollButton>
          <ScrollButton aria-label="Next sheets"><Triangle w={7} h={10} d="M0 0v10l7-5z" color="#b8b8b8" /></ScrollButton>
        </SheetNav>
        <SheetTabs>
          <SheetTab $pad={20}>ADT_Healthcare_Data_Storytellin</SheetTab>
          <SheetTab>ADT_unclean</SheetTab>
          <SheetTab $active>tbl_clean</SheetTab>
          <AddSheet aria-label="New sheet">
            <Icon w={20} h={20} stroke="#555" sw={1.2}>
              <circle cx="10" cy="10" r="9.200" />
              <path d="M10 5v10M5 10h10" strokeWidth="1.600" />
            </Icon>
          </AddSheet>
        </SheetTabs>
        <BarGrip><Dots /></BarGrip>
        <HScroll>
          <ScrollButton aria-label="Scroll left"><Triangle w={9} h={10} d="M9 0v10L0 5z" /></ScrollButton>
          <HTrack><HThumb /></HTrack>
          <ScrollButton aria-label="Scroll right"><Triangle w={9} h={10} d="M0 0v10l9-5z" /></ScrollButton>
        </HScroll>
      </SheetBar>

      <StatusBar>
        Ready
        <StatusButton><AccessibilityIcon />Accessibility: Investigate</StatusButton>
        <ViewGroup>
          <ViewButton $on aria-label="Normal view">
            <Icon w={17} h={17} sw={1.5}><path d="M1 1h15v15H1zM6 1v15M11 1v15M1 6h15M1 11h15" /></Icon>
          </ViewButton>
          <ViewButton aria-label="Page layout view">
            <Icon w={18} h={17} sw={1.5}><path d="M1 1h16v15H1zM4.500 3.500h9v10h-9zM6.500 6.500h5M6.500 8.500h5M6.500 10.500h5" /></Icon>
          </ViewButton>
          <ViewButton aria-label="Page break view">
            <Icon w={18} h={17} sw={1.5}><path d="M1 1h16v15H1zM5.500 1v8.500M11.500 1v8.500M1 9.500h11" /></Icon>
          </ViewButton>
        </ViewGroup>
        <Zoom>
          <ZoomStep aria-label="Zoom out"><Icon w={10} h={10} sw={1.3}><path d="M0 5h10" /></Icon></ZoomStep>
          <ZoomRange type="range" min={0} max={100} defaultValue={50} aria-label="Zoom" />
          <ZoomStep aria-label="Zoom in"><Icon w={10} h={10} sw={1.3}><path d="M0 5h10M5 0v10" /></Icon></ZoomStep>
        </Zoom>
        100%
      </StatusBar>

      <Watermark aria-hidden="true">
        <ArabicMark>نفذلي</ArabicMark>
        <LatinMark>nafezly.com</LatinMark>
      </Watermark>
    </Window>
  );
}
